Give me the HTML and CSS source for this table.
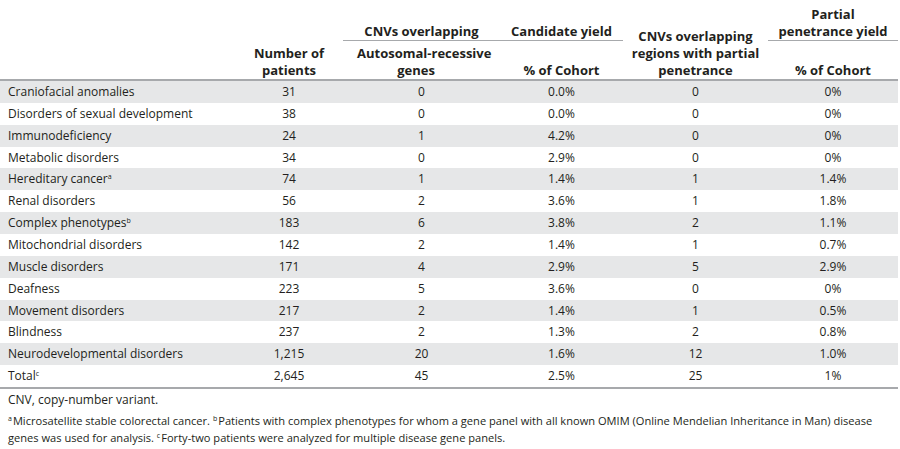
FILE: index.html
```html
<!DOCTYPE html>
<html>
<head>
<meta charset="utf-8">
<link rel="stylesheet" href="styles.css">
</head>
<body>
<table class="data">
  <colgroup>
    <col class="c1"><col class="c2"><col class="c3"><col class="c4"><col class="c5"><col class="c6">
  </colgroup>
  <thead>
    <tr class="h1">
      <th rowspan="2" class="hd hb"></th>
      <th rowspan="2" class="hd hb">Number of<br>patients</th>
      <th class="hd ul">CNVs overlapping</th>
      <th class="hd ul">Candidate yield</th>
      <th rowspan="2" class="hd hb">CNVs overlapping<br>regions with partial<br>penetrance</th>
      <th class="hd ul">Partial<br>penetrance yield</th>
    </tr>
    <tr class="h2">
      <th class="hd hb"><div class="ar"><span class="nw">Autosomal-recessive</span> genes</div></th>
      <th class="hd hb">% of Cohort</th>
      <th class="hd hb">% of Cohort</th>
    </tr>
  </thead>
  <tbody>
    <tr class="g"><td>Craniofacial anomalies</td><td>31</td><td>0</td><td>0.0%</td><td>0</td><td>0%</td></tr>
    <tr><td>Disorders of sexual development</td><td>38</td><td>0</td><td>0.0%</td><td>0</td><td>0%</td></tr>
    <tr class="g"><td>Immunodeficiency</td><td>24</td><td>1</td><td>4.2%</td><td>0</td><td>0%</td></tr>
    <tr><td>Metabolic disorders</td><td>34</td><td>0</td><td>2.9%</td><td>0</td><td>0%</td></tr>
    <tr class="g"><td>Hereditary cancer<sup>a</sup></td><td>74</td><td>1</td><td>1.4%</td><td>1</td><td>1.4%</td></tr>
    <tr><td>Renal disorders</td><td>56</td><td>2</td><td>3.6%</td><td>1</td><td>1.8%</td></tr>
    <tr class="g"><td>Complex phenotypes<sup>b</sup></td><td>183</td><td>6</td><td>3.8%</td><td>2</td><td>1.1%</td></tr>
    <tr><td>Mitochondrial disorders</td><td>142</td><td>2</td><td>1.4%</td><td>1</td><td>0.7%</td></tr>
    <tr class="g"><td>Muscle disorders</td><td>171</td><td>4</td><td>2.9%</td><td>5</td><td>2.9%</td></tr>
    <tr><td>Deafness</td><td>223</td><td>5</td><td>3.6%</td><td>0</td><td>0%</td></tr>
    <tr class="g"><td>Movement disorders</td><td>217</td><td>2</td><td>1.4%</td><td>1</td><td>0.5%</td></tr>
    <tr><td>Blindness</td><td>237</td><td>2</td><td>1.3%</td><td>2</td><td>0.8%</td></tr>
    <tr class="g"><td>Neurodevelopmental disorders</td><td>1,215</td><td>20</td><td>1.6%</td><td>12</td><td>1.0%</td></tr>
    <tr class="last"><td>Total<sup>c</sup></td><td>2,645</td><td>45</td><td>2.5%</td><td>25</td><td>1%</td></tr>
  </tbody>
</table>
<p class="note">CNV, copy-number variant.</p>
<p class="foot"><sup>a</sup>Microsatellite stable colorectal cancer. <sup>b</sup>Patients with complex phenotypes for whom a gene panel with all known OMIM (Online Mendelian Inheritance in Man) disease genes was used for analysis. <sup>c</sup>Forty-two patients were analyzed for multiple disease gene panels.</p>
</body>
</html>
```

FILE: styles.css
```css
html, body {
  margin: 0;
  padding: 0;
  background: #ffffff;
}
body {
  width: 900px;
  font-family: "Open Sans", "Noto Sans", sans-serif;
  color: #231f20;
  font-size: 12px;
}
.data {
  width: 898px;
  border-collapse: separate;
  border-spacing: 0;
  table-layout: fixed;
}
.c1 { width: 235px; }
.c2 { width: 108px; }
.c3 { width: 157px; }
.c4 { width: 123px; }
.c5 { width: 145px; }
.c6 { width: 130px; }

.hd {
  font-weight: 700;
  font-size: 13px;
  text-align: center;
  vertical-align: bottom;
  line-height: 17px;
  padding: 0;
}
.h1 .ul {
  padding-top: 6px;
  border-bottom: 1px solid #a7a9ac;
}
.h2 .hd {
  padding-top: 4px;
}
.hb {
  border-bottom: 2px solid #a7a9ac;
}
.ar {
  width: 118px;
  margin-left: 14px;
  text-align: center;
}
.nw {
  white-space: nowrap;
}
tbody td {
  height: 21.86px;
  padding: 0;
  line-height: 16px;
  text-align: center;
  vertical-align: middle;
}
tbody td:first-child {
  text-align: left;
  padding-left: 8px;
}
tr.g td {
  background: #e6e7e8;
}
tr.last td {
  border-bottom: 2px solid #a7a9ac;
}
sup {
  font-size: 7px;
  line-height: 1;
  vertical-align: 4px;
  margin-right: 1px;
}
.note {
  margin: 3px 0 0 0;
  padding-left: 8px;
  line-height: 16px;
  font-size: 12px;
}
.foot {
  margin: 5px 0 0 0;
  padding-left: 8px;
  padding-right: 10px;
  line-height: 16.5px;
  font-size: 11.1px;
}
```
